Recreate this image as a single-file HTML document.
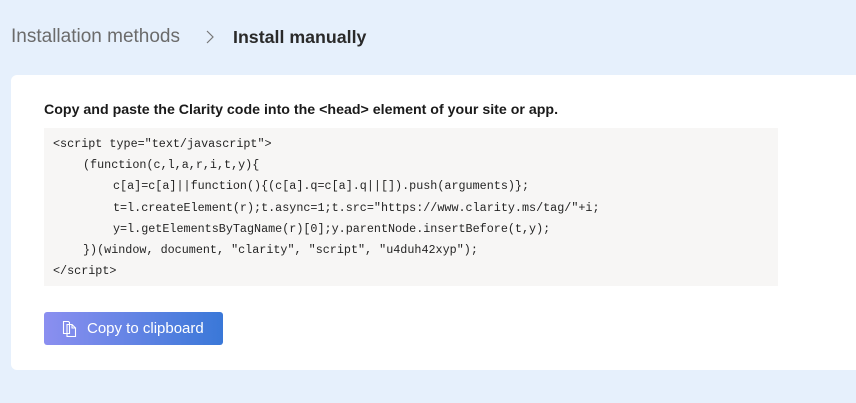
<!DOCTYPE html>
<html><head><style>
body{margin:0;width:856px;height:403px;background:#e6f0fc;font-family:"Liberation Sans",sans-serif;overflow:hidden;position:relative}
.bc{position:absolute;top:26px;left:11px;font-size:19px;color:#6b6b6b;white-space:nowrap}
.bc svg{position:absolute;left:194px;top:4px}
.bc .cur{position:absolute;left:222px;top:1px;color:#2a2a2a;font-weight:bold;font-size:17.8px}
.card{position:absolute;left:11px;top:75px;width:860px;height:295px;background:#fff;border-radius:6px}
h1{position:absolute;left:33px;top:27px;margin:0;font-size:14.2px;font-weight:bold;color:#1a1a1a;white-space:nowrap}
.code{position:absolute;left:33px;top:53px;width:734px;height:158px;background:#f7f6f5;font-family:"Liberation Mono",monospace;font-size:11.75px;color:#242424;box-sizing:border-box;padding-top:6px}
.code div{height:21.2px;line-height:21.2px;padding-left:9px;white-space:pre}
.i1{padding-left:39px!important}.i2{padding-left:69px!important}
.btn{position:absolute;left:33px;top:237px;width:179px;height:33px;border-radius:3px;background:linear-gradient(90deg,#8b8ff0,#3a78d8);color:#fff;font-size:15px;box-sizing:border-box;padding-left:43px;line-height:33px}
.btn svg{position:absolute;left:18px;top:8px}
</style></head><body>
<div class="bc">Installation methods<svg width="10" height="14" viewBox="0 0 10 14" fill="none" stroke="#777" stroke-width="1.2"><path d="M2 1l6 6-6 6"/></svg><span class="cur">Install manually</span></div>
<div class="card">
<h1>Copy and paste the Clarity code into the &lt;head&gt; element of your site or app.</h1>
<div class="code">
<div>&lt;script type="text/javascript"&gt;</div>
<div class="i1">(function(c,l,a,r,i,t,y){</div>
<div class="i2">c[a]=c[a]||function(){(c[a].q=c[a].q||[]).push(arguments)};</div>
<div class="i2">t=l.createElement(r);t.async=1;t.src="https://www.clarity.ms/tag/"+i;</div>
<div class="i2">y=l.getElementsByTagName(r)[0];y.parentNode.insertBefore(t,y);</div>
<div class="i1">})(window, document, "clarity", "script", "u4duh42xyp");</div>
<div>&lt;/script&gt;</div>
</div>
<div class="btn"><svg width="16" height="18" viewBox="0 0 16 18" fill="none" stroke="#fff" stroke-width="1.1"><path d="M1.5 1.5h5l1 1v11h-6z"/><path d="M5 4.5h5l3.5 3.5v8.5H5z"/><path d="M10 4.5v3.5h3.5"/></svg>Copy to clipboard</div>
</div>
</body></html>
